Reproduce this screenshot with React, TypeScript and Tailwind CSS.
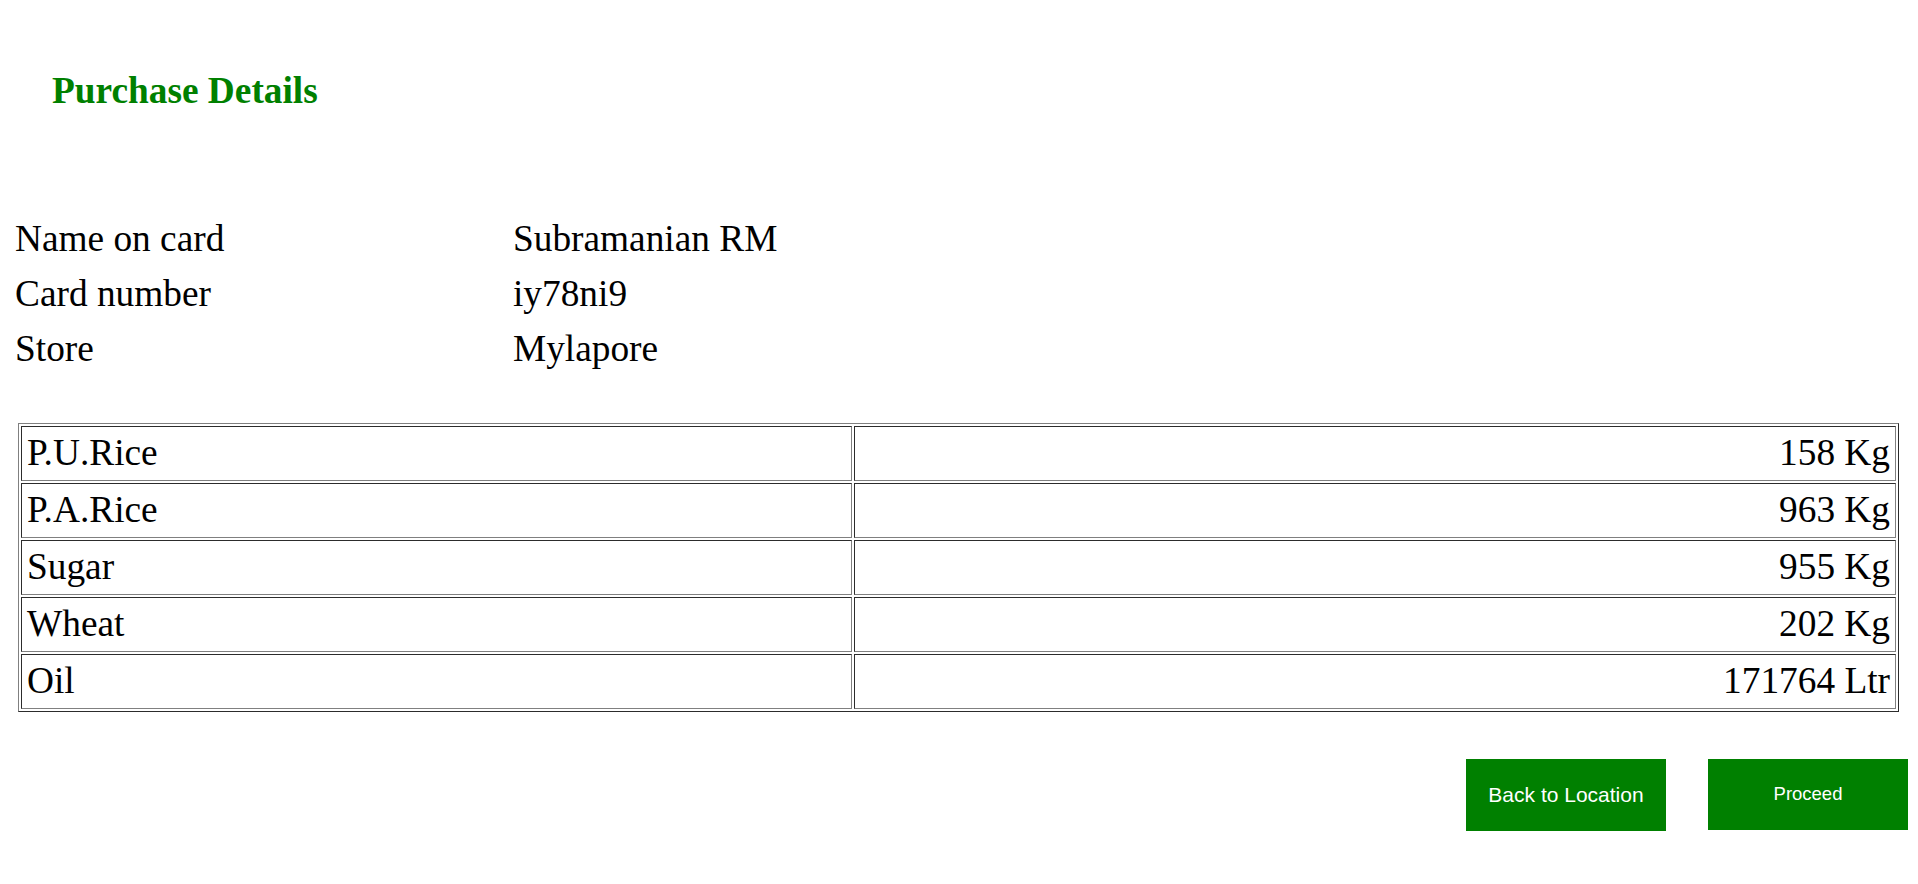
import React from 'react';

const info = [
  { label: 'Name on card', value: 'Subramanian RM' },
  { label: 'Card number', value: 'iy78ni9' },
  { label: 'Store', value: 'Mylapore' },
];

const items = [
  { name: 'P.U.Rice', qty: '158 Kg' },
  { name: 'P.A.Rice', qty: '963 Kg' },
  { name: 'Sugar', qty: '955 Kg' },
  { name: 'Wheat', qty: '202 Kg' },
  { name: 'Oil', qty: '171764 Ltr' },
];

function App() {
  return (
    <div className="min-h-screen bg-white text-black font-['Liberation_Serif','Times_New_Roman',serif] text-[37.33px] leading-[42.9px] pt-[70px]">
      {/* Heading */}
      <h2 className="pl-[52px] font-bold text-[#008000]">Purchase Details</h2>

      {/* Card info */}
      <table className="ml-2 mt-[98.5px] border-separate border-spacing-[2px]">
        <tbody>
          {info.map(row => (
            <tr key={row.label}>
              <td className="w-[496px] p-[5px] text-left align-middle">{row.label}</td>
              <td className="p-[5px] text-left align-middle">{row.value}</td>
            </tr>
          ))}
        </tbody>
      </table>

      {/* Items */}
      <table className="ml-[18px] mt-[45px] w-[1881px] border-separate border-spacing-[2px] border border-t-[#808080] border-l-[#808080] border-r-[#2c2c2c] border-b-[#2c2c2c]">
        <tbody>
          {items.map(item => (
            <tr key={item.name}>
              <td className="w-[831px] p-[5px] text-left align-middle border border-t-[#2c2c2c] border-l-[#2c2c2c] border-r-[#808080] border-b-[#808080]">
                {item.name}
              </td>
              <td className="p-[5px] text-right align-middle border border-t-[#2c2c2c] border-l-[#2c2c2c] border-r-[#808080] border-b-[#808080]">
                {item.qty}
              </td>
            </tr>
          ))}
        </tbody>
      </table>

      {/* Actions */}
      <div className="mt-[47px] flex justify-end items-start gap-[42px] pr-[10px] font-['Liberation_Sans',Arial,sans-serif] text-white">
        <button className="w-[200px] h-[72px] bg-[#008000] text-[21px] leading-[24px] flex items-center justify-center">
          Back to Location
        </button>
        <button className="w-[200px] h-[71px] bg-[#008000] text-[18.5px] leading-[21px] flex items-center justify-center pb-[2px]">
          Proceed
        </button>
      </div>
    </div>
  );
}

export default App;
